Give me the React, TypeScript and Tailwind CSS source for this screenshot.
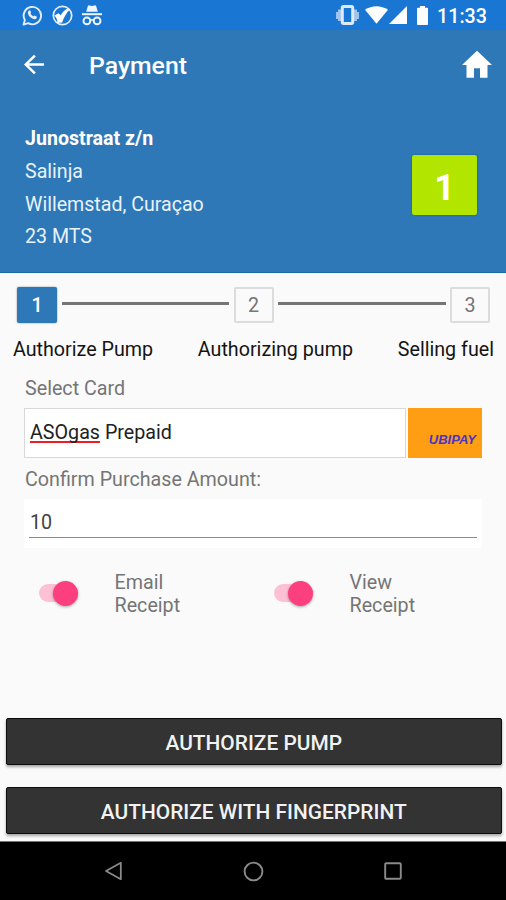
import type { ReactNode } from "react";

const STEPS = ["Authorize Pump", "Authorizing pump", "Selling fuel"];

function StatusBar() {
  return (
    <div className="flex h-[30px] items-center bg-[#1976d2] pl-[22px] pr-[19px] text-white">
      <svg className="h-[21px] w-[21px]" viewBox="0 0 21 21" fill="none" stroke="#e3eefb">
        <path d="M1.6 19.6 2.9 15A8.7 8.7 0 1 1 6.2 18.2Z" strokeWidth="1.9" strokeLinejoin="round" />
        <path
          d="M7.2 5.4c.6-.4 1.1 0 1.3.5l.6 1.5c.1.4-.7 1-.5 1.4.7 1.3 1.6 2 2.9 2.5.4.1.9-1 1.3-.8l1.8 1c.5.3.2 1.7-.4 2.2-2.6 1.9-8.7-2.6-8.3-6.5.1-.7.6-1.5 1.3-1.8Z"
          fill="#e3eefb"
          stroke="none"
        />
      </svg>
      <svg className="ml-[9px] h-[21px] w-[21px]" viewBox="0 0 21 21" fill="none">
        <circle cx="10.5" cy="10.5" r="9.2" stroke="#e3eefb" strokeWidth="1.7" />
        <path d="M2.4 10.4 6.5 8.3 8.7 10.2C10.3 7.6 12.3 5.5 15 3.8L18 4.2C14 8.5 12 12 10.2 17.5L5.4 18C5.4 14.9 4.6 12.6 2.4 10.4Z" fill="white" />
      </svg>
      <svg className="ml-[9px] h-[21px] w-[20px]" viewBox="0 0 20 21" fill="none">
        <path d="M5.8 1.2c.3-.8.9-1 1.6-.8L10 1l2.6-.6c.7-.2 1.3 0 1.6.8l1.6 5.6H4.2Z" fill="#eef5fd" />
        <path d="M0 8.2h20v2H0Z" fill="#eef5fd" />
        <circle cx="4.9" cy="15.9" r="3.4" stroke="#eef5fd" strokeWidth="1.9" />
        <circle cx="15.1" cy="15.9" r="3.4" stroke="#eef5fd" strokeWidth="1.9" />
        <path d="M8.2 15.5q1.8-1.4 3.6 0" stroke="#eef5fd" strokeWidth="1.6" />
      </svg>

      <svg className="ml-auto h-[20px] w-[23px]" viewBox="0 0 23 20">
        <path d="M0 7h2v7H0ZM2 4.5h3v11.5H2ZM21 7h2v7h-2ZM18 4.5h3v11.5h-3Z" fill="#9fc3ee" />
        <rect x="6.3" y="1.6" width="10.4" height="16.8" rx="1.2" fill="none" stroke="#dceafa" strokeWidth="3" />
      </svg>
      <svg className="ml-[6px] h-[18px] w-[23px]" viewBox="0 0 23 18" fill="white">
        <path d="M0 3.7C6.8-1 16.2-1 23 3.7L11.5 17.8Z" />
      </svg>
      <svg className="ml-[1px] h-[18px] w-[18px]" viewBox="0 0 18 18" fill="white">
        <path d="M18 0v18H0Z" />
      </svg>
      <svg className="ml-[10px] h-[19px] w-[11px]" viewBox="0 0 11 19" fill="white">
        <path d="M3 0h5v1.8h2.2q.8 0 .8.8V18q0 1-.8 1H.8Q0 19 0 18V2.6q0-.8.8-.8H3Z" />
      </svg>
      <span className="ml-[9px] mt-[4px] text-[19.7px] font-medium leading-[24px]">11:33</span>
    </div>
  );
}

function AppBar() {
  return (
    <div className="flex h-[70px] items-center pl-[19px] pr-[11px]">
      <svg className="mb-[2px] h-[29px] w-[30px]" viewBox="0 0 24 24" preserveAspectRatio="none" fill="white">
        <path d="M20 11H7.83l5.59-5.59L12 4l-8 8 8 8 1.41-1.41L7.83 13H20v-2z" />
      </svg>
      <h1 className="ml-[40px] mt-px text-[24.8px] font-medium leading-[30px]">Payment</h1>
      <svg className="ml-auto h-[38px] w-[36px]" viewBox="0 0 24 24" preserveAspectRatio="none" fill="white">
        <path d="M10 20v-6h4v6h5v-8h3L12 3 2 12h3v8z" />
      </svg>
    </div>
  );
}

function Station() {
  return (
    <div className="flex justify-between pl-[25px] pr-[29px] pt-[21px]">
      <div className="pt-[2px] text-[19.6px] leading-[32.8px] text-[#eaf2fa]">
        <p className="font-bold text-white">Junostraat z/n</p>
        <p>Salinja</p>
        <p>Willemstad, Curaçao</p>
        <p>23 MTS</p>
      </div>
      <div className="mt-[34px] flex h-[60px] w-[65px] items-center justify-center rounded-[2px] bg-[#b2e600] pt-[5px] text-[36px] font-bold leading-none shadow-[0_0_2px_#0b5a8a]">
        1
      </div>
    </div>
  );
}

function StepBox({ n, active }: { n: number; active?: boolean }) {
  return active ? (
    <div className="flex h-[36px] w-[40px] items-center justify-center rounded-[2px] bg-[#2e78b7] pt-[2px] text-[19.7px] font-medium text-white shadow-[0_0_2px_#8a8a8a]">
      {n}
    </div>
  ) : (
    <div className="flex h-[36px] w-[40px] items-center justify-center rounded-[2px] border-2 border-[#dcdcdc] bg-[#fafafa] pt-[2px] text-[19.7px] text-[#757575]">
      {n}
    </div>
  );
}

function StepLine() {
  return <div className="mx-[4.5px] mb-[4px] h-[3px] flex-1 bg-[#757575]" />;
}

function Stepper() {
  return (
    <>
      <div className="flex items-center pl-[17px] pr-[16px] pt-[14px]">
        <StepBox n={1} active />
        <StepLine />
        <StepBox n={2} />
        <StepLine />
        <StepBox n={3} />
      </div>
      <div className="flex justify-between pl-[13px] pr-[12px] pt-[15px] text-[19.7px] leading-[24px] text-[#141414]">
        {STEPS.map((step) => (
          <span key={step}>{step}</span>
        ))}
      </div>
    </>
  );
}

function Toggle({ children }: { children: ReactNode }) {
  return (
    <div className="flex w-[235px] shrink-0 items-center">
      <div className="flex h-[18px] w-[39px] items-center justify-end rounded-full bg-[#fec0d5]">
        <div className="h-[25px] w-[25px] shrink-0 rounded-full bg-[#fc407f] shadow-[0_1px_3px_rgba(0,0,0,0.35)]" />
      </div>
      <div className="ml-[36.5px] mt-[2px] text-[19.7px] leading-[23.1px] text-[#757575]">{children}</div>
    </div>
  );
}

function ActionButton({ children }: { children: ReactNode }) {
  return (
    <button
      type="button"
      className="block h-[47px] w-full rounded-[2px] border border-[#0c0c0c] bg-[#333333] pt-[2px] text-[20.9px] font-medium leading-[24px] text-[#f2f2f2] shadow-[0_2px_3px_rgba(0,0,0,0.35)]"
    >
      {children}
    </button>
  );
}

export default function App() {
  return (
    <div className="flex h-[900px] w-[506px] flex-col overflow-hidden bg-[#fafafa] font-['Roboto',sans-serif]">
      <StatusBar />
      <header className="h-[243px] border-b border-[#1469ad] bg-[#2e78b7] text-white">
        <AppBar />
        <Station />
      </header>

      <main className="flex-1">
        <Stepper />
        <div className="px-[24px] pt-[15px]">
          <p className="pl-px text-[19.7px] leading-[24px] text-[#757575]">Select Card</p>
          <div className="mt-[7px] flex h-[50px] gap-[2px]">
            <div className="w-[382px] border border-[#d8d8d8] bg-white pl-[5px] pt-[12px] text-[19.7px] leading-[24px] text-[#212121]">
              <span className="inline-block h-[22px] border-b-2 border-[#f01c24] leading-[24px]">ASOgas</span> Prepaid
            </div>
            <div className="flex flex-1 items-end justify-end bg-[#ff9e12] pb-[11px] pr-[6px] font-['Liberation_Sans',sans-serif] text-[13px] font-bold italic leading-[15px] text-[#4a35c4]">
              UBIPAY
            </div>
          </div>
          <p className="mt-[10px] pl-px text-[19.7px] leading-[24px] text-[#757575]">Confirm Purchase Amount:</p>
          <div className="mt-[7px] h-[49px] bg-white px-[5px] pt-[12px]">
            <div className="h-[27px] border-b border-[#8c8c8c] pl-px text-[19.7px] leading-[24px] text-[#424242]">10</div>
          </div>
        </div>

        <div className="flex pl-[39px] pt-[21px]">
          <Toggle>
            Email
            <br />
            Receipt
          </Toggle>
          <Toggle>
            View
            <br />
            Receipt
          </Toggle>
        </div>

        <div className="flex flex-col gap-[22px] pl-[5.5px] pr-[4px] pt-[101px]">
          <ActionButton>AUTHORIZE PUMP</ActionButton>
          <ActionButton>AUTHORIZE WITH FINGERPRINT</ActionButton>
        </div>
      </main>

      <nav className="flex h-[59px] items-center border-t border-[#777777] bg-black pl-[104px] text-[#8a8a8a]">
        <svg className="h-[20px] w-[18px]" viewBox="0 0 18 20" fill="none" stroke="currentColor" strokeWidth="1.8">
          <path d="M16.8 1.8v16.4L2 10Z" strokeLinejoin="round" />
        </svg>
        <svg className="ml-[121px] h-[21px] w-[21px]" viewBox="0 0 21 21" fill="none" stroke="currentColor" strokeWidth="1.9">
          <circle cx="10.5" cy="10.5" r="8.9" />
        </svg>
        <svg className="ml-[120px] h-[18px] w-[18px]" viewBox="0 0 18 18" fill="none" stroke="currentColor" strokeWidth="1.9">
          <rect x="1.2" y="1.2" width="15.6" height="15.6" rx="1" />
        </svg>
      </nav>
    </div>
  );
}
